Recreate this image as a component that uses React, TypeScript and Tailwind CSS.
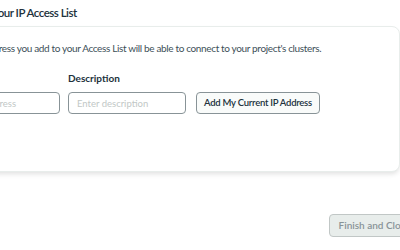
import React from 'react';

export default function App() {
  return (
    <div className="w-[400px] h-[250px] overflow-hidden bg-white font-['Lato',sans-serif] text-[#21313c]">
      {/* shifted wrapper: the screenshot is cropped on the left */}
      <div className="ml-[-100px] w-[500px]">
        <h2 className="pl-[71px] pt-[5px] h-[26px] text-[11.5px] font-semibold leading-[16px] tracking-[-0.5px]">
          Add Your IP Access List
        </h2>

        <div className="h-[146px] rounded-[8px] border border-[#e8edeb] bg-white shadow-[0_3px_5px_-1px_rgba(0,0,0,0.12)] px-[35px] pt-[14px]">
          <p className="pl-[4px] text-[10px] leading-[14px] tracking-[-0.35px] text-[#3d4f58]">
            Only an IP address you add to your Access List will be able to connect to your project's clusters.
          </p>

          <div className="mt-[16px] flex items-end gap-[8px]">
            <div className="flex flex-col">
              <label className="text-[10px] font-bold leading-[14px] mb-[7px]">IP Address</label>
              <input
                placeholder="Enter IP address"
                className="h-[22px] w-[124px] rounded-[4px] border border-[#889397] pl-[12px] pr-[8px] text-[9.5px] placeholder:text-[#c1c7c6] outline-none"
              />
            </div>
            <div className="flex flex-col">
              <label className="text-[10px] font-bold leading-[14px] mb-[7px]">Description</label>
              <input
                placeholder="Enter description"
                className="h-[22px] w-[118px] rounded-[4px] border border-[#889397] px-[8px] text-[9.5px] placeholder:text-[#c1c7c6] outline-none"
              />
            </div>
            <button className="ml-[2px] h-[22px] w-[124px] rounded-[4px] border border-[#889397] bg-[#f9fbfa] text-[9.5px] font-semibold tracking-[-0.25px] text-[#21313c]">
              Add My Current IP Address
            </button>
          </div>
        </div>
      </div>

      <div className="mt-[42px] flex justify-end">
        <button className="mr-[-20px] h-[23px] w-[91px] rounded-[4px] border border-[#c1c7c6] bg-[#e8edeb] text-[10px] font-semibold text-[#889397]">
          Finish and Close
        </button>
      </div>
    </div>
  );
}
